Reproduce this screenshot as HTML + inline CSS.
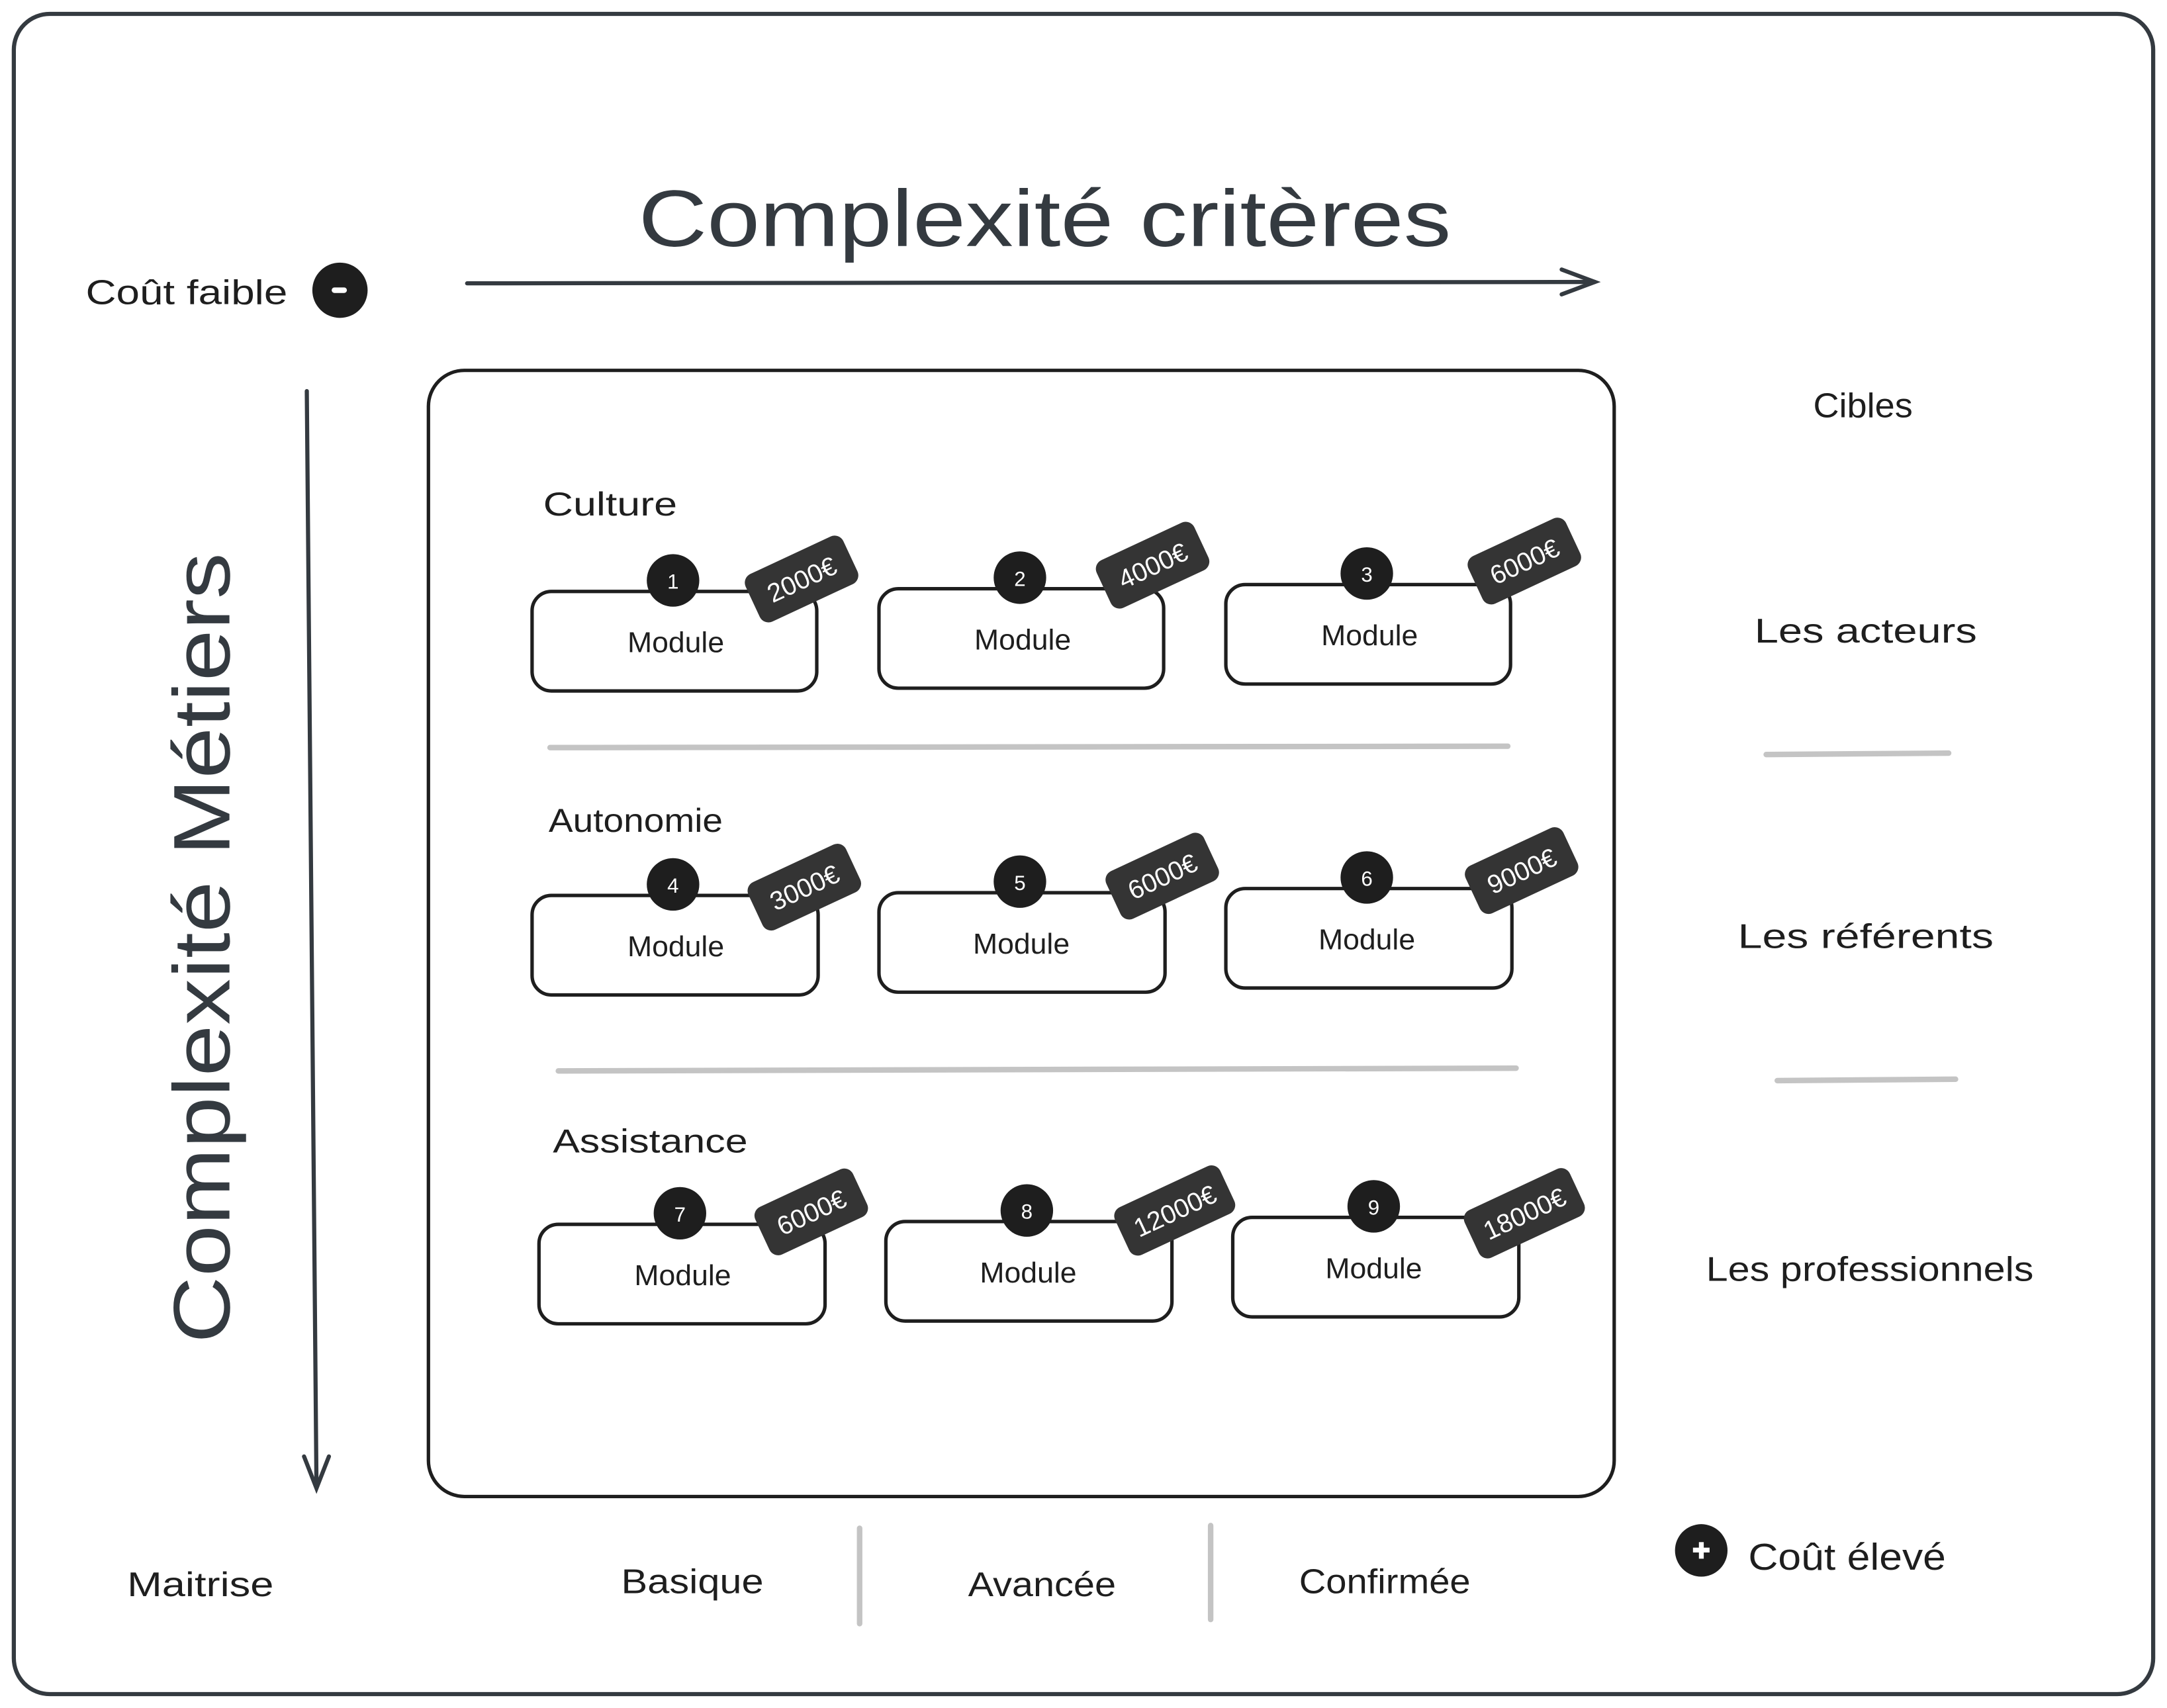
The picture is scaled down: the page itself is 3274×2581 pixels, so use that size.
<!DOCTYPE html>
<html><head><meta charset="utf-8"><style>
html,body{margin:0;padding:0;background:#fff;}
svg{display:block;}
text{font-family:"Liberation Sans",sans-serif;fill:#1e1e1e;}
</style></head><body>
<svg width="3274" height="2581" viewBox="0 0 1568 1236" xmlns="http://www.w3.org/2000/svg">
<rect x="0" y="0" width="1568" height="1236" fill="#fff"/>
<rect x="10" y="10" width="1548" height="1216" rx="26" fill="none" stroke="#343a40" stroke-width="3"/>
<text x="462" y="178" font-size="58" textLength="588" lengthAdjust="spacingAndGlyphs" style="fill:#343a40">Complexité critères</text>
<g stroke="#343a40" stroke-width="3" fill="none" stroke-linecap="round">
<line x1="338" y1="205" x2="1154" y2="204"/>
<path d="M1130 195 L1154 204 L1130 213"/>
<line x1="222" y1="283" x2="229" y2="1076"/>
<path d="M220 1054 L229 1077 L238 1054"/>
</g>
<text x="62" y="220" font-size="25" textLength="146" lengthAdjust="spacingAndGlyphs">Coût faible</text>
<circle cx="246" cy="210" r="20" fill="#1e1e1e"/>
<rect x="240" y="208" width="11" height="4" rx="2" fill="#fff"/>
<text transform="translate(166,972) rotate(-90)" x="0" y="0" font-size="58" textLength="572" lengthAdjust="spacingAndGlyphs" style="fill:#343a40">Complexité Métiers</text>
<rect x="310" y="268" width="858" height="815" rx="26" fill="none" stroke="#1e1e1e" stroke-width="2.5"/>
<text x="393" y="373" font-size="24" textLength="97" lengthAdjust="spacingAndGlyphs">Culture</text>
<text x="397" y="602" font-size="24" textLength="126" lengthAdjust="spacingAndGlyphs">Autonomie</text>
<text x="400" y="834" font-size="24" textLength="141" lengthAdjust="spacingAndGlyphs">Assistance</text>
<g stroke="#c4c4c4" stroke-width="4" stroke-linecap="round">
<line x1="398" y1="541" x2="1091" y2="540"/>
<line x1="404" y1="775" x2="1097" y2="773"/>
<line x1="1278" y1="546" x2="1410" y2="545"/>
<line x1="1286" y1="782" x2="1415" y2="781"/>
<line x1="622" y1="1106" x2="622" y2="1175"/>
<line x1="876" y1="1104" x2="876" y2="1172"/>
</g>
<g fill="#fff" stroke="#1e1e1e" stroke-width="2.5">
<rect x="385" y="428" width="206" height="72" rx="14"/>
<rect x="636" y="426" width="206" height="72" rx="14"/>
<rect x="887" y="423" width="206" height="72" rx="14"/>
<rect x="385" y="648" width="207" height="72" rx="14"/>
<rect x="636" y="646" width="207" height="72" rx="14"/>
<rect x="887" y="643" width="207" height="72" rx="14"/>
<rect x="390" y="886" width="207" height="72" rx="14"/>
<rect x="641" y="884" width="207" height="72" rx="14"/>
<rect x="892" y="881" width="207" height="72" rx="14"/>
</g>
<g font-size="21" text-anchor="middle">
<text x="489" y="472" textLength="70" lengthAdjust="spacingAndGlyphs">Module</text><text x="740" y="470" textLength="70" lengthAdjust="spacingAndGlyphs">Module</text><text x="991" y="467" textLength="70" lengthAdjust="spacingAndGlyphs">Module</text>
<text x="489" y="692" textLength="70" lengthAdjust="spacingAndGlyphs">Module</text><text x="739" y="690" textLength="70" lengthAdjust="spacingAndGlyphs">Module</text><text x="989" y="687" textLength="70" lengthAdjust="spacingAndGlyphs">Module</text>
<text x="494" y="930" textLength="70" lengthAdjust="spacingAndGlyphs">Module</text><text x="744" y="928" textLength="70" lengthAdjust="spacingAndGlyphs">Module</text><text x="994" y="925" textLength="70" lengthAdjust="spacingAndGlyphs">Module</text>
</g>
<g fill="#1e1e1e">
<circle cx="487" cy="420" r="19"/><circle cx="738" cy="418" r="19"/><circle cx="989" cy="415" r="19"/>
<circle cx="487" cy="640" r="19"/><circle cx="738" cy="638" r="19"/><circle cx="989" cy="635" r="19"/>
<circle cx="492" cy="878" r="19"/><circle cx="743" cy="876" r="19"/><circle cx="994" cy="873" r="19"/>
</g>
<g font-size="15" text-anchor="middle">
<text x="487" y="426" style="fill:#fff">1</text><text x="738" y="424" style="fill:#fff">2</text><text x="989" y="421" style="fill:#fff">3</text>
<text x="487" y="646" style="fill:#fff">4</text><text x="738" y="644" style="fill:#fff">5</text><text x="989" y="641" style="fill:#fff">6</text>
<text x="492" y="884" style="fill:#fff">7</text><text x="743" y="882" style="fill:#fff">8</text><text x="994" y="879" style="fill:#fff">9</text>
</g>
<g>
<g transform="translate(580,419) rotate(-25)"><rect x="-39" y="-19" width="78" height="38" rx="7" fill="#343434"/><text x="0" y="7" font-size="19" text-anchor="middle" style="fill:#fff">2000€</text></g>
<g transform="translate(834,409) rotate(-25)"><rect x="-39" y="-19" width="78" height="38" rx="7" fill="#343434"/><text x="0" y="7" font-size="19" text-anchor="middle" style="fill:#fff">4000€</text></g>
<g transform="translate(1103,406) rotate(-25)"><rect x="-39" y="-19" width="78" height="38" rx="7" fill="#343434"/><text x="0" y="7" font-size="19" text-anchor="middle" style="fill:#fff">6000€</text></g>
<g transform="translate(582,642) rotate(-25)"><rect x="-39" y="-19" width="78" height="38" rx="7" fill="#343434"/><text x="0" y="7" font-size="19" text-anchor="middle" style="fill:#fff">3000€</text></g>
<g transform="translate(841,634) rotate(-25)"><rect x="-39" y="-19" width="78" height="38" rx="7" fill="#343434"/><text x="0" y="7" font-size="19" text-anchor="middle" style="fill:#fff">6000€</text></g>
<g transform="translate(1101,630) rotate(-25)"><rect x="-39" y="-19" width="78" height="38" rx="7" fill="#343434"/><text x="0" y="7" font-size="19" text-anchor="middle" style="fill:#fff">9000€</text></g>
<g transform="translate(587,877) rotate(-25)"><rect x="-39" y="-19" width="78" height="38" rx="7" fill="#343434"/><text x="0" y="7" font-size="19" text-anchor="middle" style="fill:#fff">6000€</text></g>
<g transform="translate(850,876) rotate(-25)"><rect x="-42" y="-19" width="84" height="38" rx="7" fill="#343434"/><text x="0" y="7" font-size="19" text-anchor="middle" style="fill:#fff">12000€</text></g>
<g transform="translate(1103,878) rotate(-25)"><rect x="-42" y="-19" width="84" height="38" rx="7" fill="#343434"/><text x="0" y="7" font-size="19" text-anchor="middle" style="fill:#fff">18000€</text></g>
</g>
<g font-size="25" text-anchor="middle">
<text x="1348" y="302" textLength="72" lengthAdjust="spacingAndGlyphs">Cibles</text>
<text x="1350" y="465" textLength="161" lengthAdjust="spacingAndGlyphs">Les acteurs</text>
<text x="1350" y="686" textLength="185" lengthAdjust="spacingAndGlyphs">Les référents</text>
<text x="1353" y="927" textLength="237" lengthAdjust="spacingAndGlyphs">Les professionnels</text>
<text x="145" y="1155" textLength="106" lengthAdjust="spacingAndGlyphs">Maitrise</text>
<text x="501" y="1153" textLength="103" lengthAdjust="spacingAndGlyphs">Basique</text>
<text x="754" y="1155" textLength="107" lengthAdjust="spacingAndGlyphs">Avancée</text>
<text x="1002" y="1153" textLength="124" lengthAdjust="spacingAndGlyphs">Confirmée</text>
</g>
<circle cx="1231" cy="1122" r="19" fill="#1e1e1e"/>
<rect x="1225" y="1120" width="12" height="3.5" fill="#fff"/>
<rect x="1229.3" y="1116" width="3.5" height="12" fill="#fff"/>
<text x="1265" y="1136" font-size="27" textLength="143" lengthAdjust="spacingAndGlyphs">Coût élevé</text>
</svg>
</body></html>
